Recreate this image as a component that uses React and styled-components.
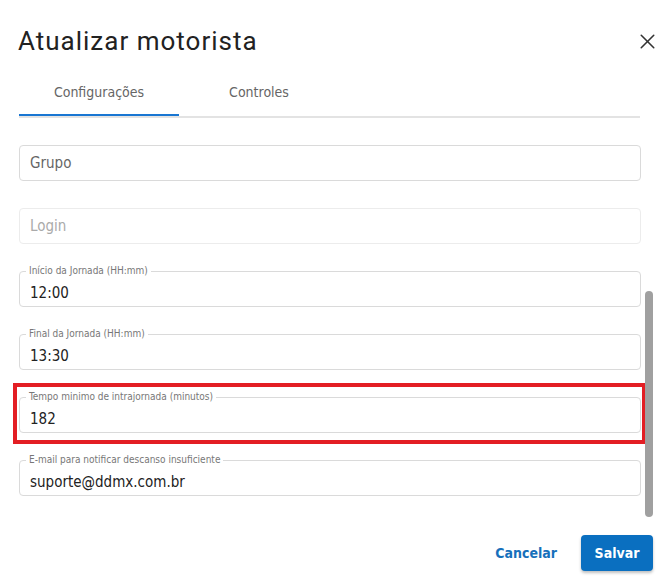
import styled, { createGlobalStyle } from "styled-components";
import { X } from "lucide-react";

const GlobalStyle = createGlobalStyle`
    html, body { margin: 0; padding: 0; background: #fff; }
    body { font-family: "Liberation Sans Narrow", "DejaVu Sans Condensed", Roboto, sans-serif; }
    * { box-sizing: border-box; }
`;

const Dialog = styled.div`
    width: 666px;
    height: 579px;
    display: flex;
    flex-direction: column;
    background: #fff;
    overflow: hidden;
`;

const Header = styled.div`
    display: flex;
    align-items: center;
    justify-content: space-between;
    height: 28px;
    margin-top: 27px;
    padding: 0 6px 0 18px;
`;

const Title = styled.h2`
    margin: 0;
    font-family: Roboto, sans-serif;
    font-size: 26px;
    line-height: 28px;
    letter-spacing: 1px;
    font-weight: 400;
    color: #222;
`;

const CloseButton = styled.button`
    border: 0;
    background: none;
    padding: 0;
    width: 26px;
    height: 26px;
    display: flex;
    align-items: center;
    justify-content: center;
    color: #333;
`;

const TabBar = styled.div`
    display: flex;
    margin: 13px 26px 0 19px;
    border-bottom: 2px solid #e3e3e3;
`;

const Tab = styled.div`
    width: 160px;
    height: 48px;
    display: flex;
    align-items: center;
    justify-content: center;
    font-size: 14px;
    color: #666;
    box-shadow: ${ ( { active } ) => active ? "inset 0 -2px 0 #1976d2" : "none" };
`;

const Body = styled.div`
    display: flex;
    height: 402px;
`;

const Fields = styled.div`
    width: 622px;
    margin-left: 19px;
    padding-top: 27px;
    display: flex;
    flex-direction: column;
    gap: 27px;
`;

const ScrollTrack = styled.div`
    width: 8px;
    margin-left: 4px;
    padding-top: 173px;
`;

const ScrollThumb = styled.div`
    height: 226px;
    border-radius: 4px;
    background: #a0a0a0;
`;

const Highlight = styled.div`
    margin: -14px -5px -11px -6px;
    padding: 10px 1px 7px 2px;
    border: 4px solid #e31e24;
`;

const Box = styled.div`
    position: relative;
    height: 36px;
    border: 1px solid ${ ( { disabled } ) => disabled ? "#ececec" : "#dadada" };
    border-radius: 4px;
    padding: ${ ( { labelled } ) => labelled ? "8px 10px 0" : "0 10px" };
    display: flex;
    align-items: center;
    font-size: 15px;
    color: ${ ( { tone } ) => tone };
`;

const FloatLabel = styled.span`
    position: absolute;
    top: -7px;
    left: 6px;
    padding: 0 3px;
    background: #fff;
    font-size: 10px;
    line-height: 12px;
    color: #777;
`;

const Footer = styled.div`
    display: flex;
    justify-content: flex-end;
    align-items: center;
    gap: 16px;
    padding: 15px 13px 0 0;
`;

const TextButton = styled.button`
    border: 0;
    background: none;
    padding: 0 8px;
    height: 36px;
    font-family: inherit;
    font-size: 14px;
    font-weight: 700;
    color: #1670bb;
`;

const PrimaryButton = styled.button`
    border: 0;
    width: 72px;
    height: 36px;
    border-radius: 4px;
    background: #0a6fc0;
    box-shadow: 0 2px 3px rgba(0, 0, 0, 0.25);
    font-family: inherit;
    font-size: 14px;
    font-weight: 700;
    color: #fff;
`;

const fields = [
    { placeholder: "Grupo", tone: "#666" },
    { placeholder: "Login", tone: "#aaa", disabled: true },
    { label: "Início da Jornada (HH:mm)", value: "12:00" },
    { label: "Final da Jornada (HH:mm)", value: "13:30" },
    { label: "Tempo minimo de intrajornada (minutos)", value: "182", highlight: true },
    { label: "E-mail para notificar descanso insuficiente", value: "suporte@ddmx.com.br" },
];

const Field = ( { field } ) => {
    const box = <Box
        labelled={ !!field.label }
        disabled={ field.disabled }
        tone={ field.tone || "#222" }
    >
        { field.label && <FloatLabel>{ field.label }</FloatLabel> }
        { field.value || field.placeholder }
    </Box>;
    return field.highlight ? <Highlight>{ box }</Highlight> : box;
};

export default function App() {
    return <Dialog>
        <GlobalStyle />
        <Header>
            <Title>Atualizar motorista</Title>
            <CloseButton><X size={ 25 } strokeWidth={ 1.5 } /></CloseButton>
        </Header>
        <TabBar>
            <Tab active>Configurações</Tab>
            <Tab>Controles</Tab>
        </TabBar>
        <Body>
            <Fields>
                { fields.map( ( field, index ) => <Field key={ index } field={ field } /> ) }
            </Fields>
            <ScrollTrack><ScrollThumb /></ScrollTrack>
        </Body>
        <Footer>
            <TextButton>Cancelar</TextButton>
            <PrimaryButton>Salvar</PrimaryButton>
        </Footer>
    </Dialog>;
}
